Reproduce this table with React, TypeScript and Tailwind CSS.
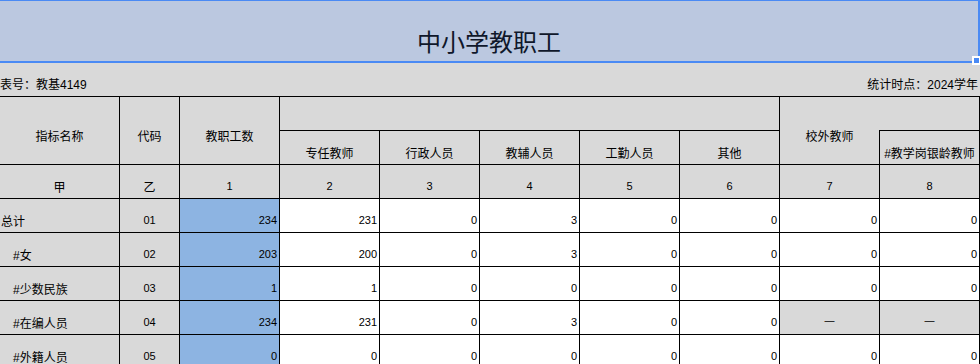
const FONT = "font-['Liberation_Sans','Noto_Sans_CJK_SC',sans-serif]";

type Row = {
  name: string;
  indent: boolean;
  code: string;
  total: string;
  values: string[];
};

const rows: Row[] = [
  { name: "总计", indent: false, code: "01", total: "234", values: ["231", "0", "3", "0", "0", "0", "0"] },
  { name: "#女", indent: true, code: "02", total: "203", values: ["200", "0", "3", "0", "0", "0", "0"] },
  { name: "#少数民族", indent: true, code: "03", total: "1", values: ["1", "0", "0", "0", "0", "0", "0"] },
  { name: "#在编人员", indent: true, code: "04", total: "234", values: ["231", "0", "3", "0", "0", "—", "—"] },
  { name: "#外籍人员", indent: true, code: "05", total: "0", values: ["0", "0", "0", "0", "0", "0", "0"] },
];

const cell = "border-r border-b border-black flex";
const subHeads = ["专任教师", "行政人员", "教辅人员", "工勤人员", "其他"];
const numbers = ["1", "2", "3", "4", "5", "6", "7", "8"];

const App = () => {
  return (
    <div className={`${FONT} w-[980px] h-[364px] overflow-hidden bg-[#d9d9d9] text-black`}>
      {/* title band, selected cell */}
      <div className="relative h-[63px] border-t border-b-2 border-r-2 border-[#4a8af4] bg-[#bbc8e0] flex items-end justify-center pb-[5px]">
        <div className="text-[24px] leading-[26px] text-[#0f172a] font-['Liberation_Serif','Noto_Sans_CJK_SC',serif]">
          中小学教职工
        </div>
        <div className="absolute right-[-3px] bottom-[-4px] w-[9px] h-[9px] border-2 border-white bg-[#4a8af4]" />
      </div>

      <div className="h-[33px] flex items-end justify-between pb-[4px] pr-[2px] text-[12px] leading-[14px]">
        <div>表号：教基4149</div>
        <div>统计时点：2024学年</div>
      </div>

      <div className="grid grid-cols-[120px_60px_repeat(8,100px)] auto-rows-[34px] border-t border-black text-[12px] leading-[14px]">
        <div className={`${cell} row-span-2 items-end justify-center pb-[20px]`}>指标名称</div>
        <div className={`${cell} row-span-2 items-end justify-center pb-[20px]`}>代码</div>
        <div className={`${cell} row-span-2 items-end justify-center pb-[20px]`}>教职工数</div>
        <div className={`${cell} col-span-5`} />
        <div className={`${cell} row-span-2 items-end justify-center pb-[20px]`}>校外教师</div>
        <div className="border-b border-r border-black ml-[-1px] bg-[#d9d9d9]" />
        {subHeads.map((h) => (
          <div key={h} className={`${cell} items-end justify-center pb-[3px]`}>
            {h}
          </div>
        ))}
        <div className={`${cell} ml-[-1px] border-l items-end justify-center pb-[3px] whitespace-nowrap overflow-visible`}>
          #教学岗银龄教师
        </div>

        <div className={`${cell} items-end justify-center pb-[3px]`}>甲</div>
        <div className={`${cell} items-end justify-center pb-[3px]`}>乙</div>
        {numbers.map((n) => (
          <div key={n} className={`${cell} items-end justify-center pb-[5px] text-[11px] leading-[13px]`}>
            {n}
          </div>
        ))}

        {rows.map((r) => (
          <div key={r.code} className="contents">
            <div className={`${cell} items-end pb-[3px] ${r.indent ? "pl-[13px]" : "pl-[1px]"}`}>{r.name}</div>
            <div className={`${cell} items-end justify-center pb-[5px] text-[11px] leading-[13px]`}>{r.code}</div>
            <div className={`${cell} items-end justify-end pb-[5px] pr-[2px] bg-[#8db4e2] text-[11px] leading-[13px]`}>
              {r.total}
            </div>
            {r.values.map((v, i) =>
              v === "—" ? (
                <div
                  key={i}
                  className={`${cell} items-end justify-center pb-[7px] bg-[#d9d9d9] text-[10px] leading-[12px] font-['Liberation_Sans',sans-serif]`}
                >
                  —
                </div>
              ) : (
                <div
                  key={i}
                  className={`${cell} items-end justify-end pb-[5px] pr-[2px] bg-white text-[11px] leading-[13px]`}
                >
                  {v}
                </div>
              )
            )}
          </div>
        ))}
      </div>
    </div>
  );
};

export default App;
